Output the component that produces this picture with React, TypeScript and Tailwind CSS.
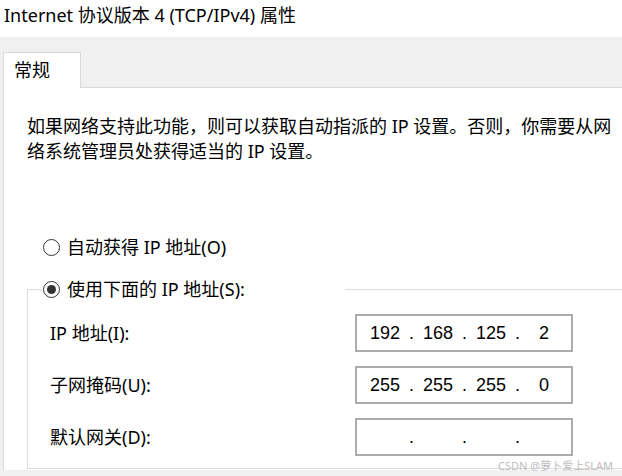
const UI_FONT = "font-['Segoe_UI','Noto_Sans','Noto_Sans_CJK_SC',sans-serif]";

function Radio({ checked }: { checked?: boolean }) {
  return (
    <span className="flex h-[17px] w-[17px] shrink-0 items-center justify-center rounded-full border border-[#333333] bg-white">
      {checked && <span className="h-[9px] w-[9px] rounded-full bg-[#333333]" />}
    </span>
  );
}

function IpBox({ parts }: { parts: string[] }) {
  return (
    <div className="flex h-[38px] w-[218px] items-center border-2 border-[#acacac] bg-white pl-[8px] font-['Liberation_Sans',Arial,sans-serif] text-[18px] text-black">
      {parts.map((p, i) => (
        <div key={i} className="flex">
          <span className="w-[40px] text-center">{p}</span>
          {i < 3 && <span className="w-[13px] text-center">.</span>}
        </div>
      ))}
    </div>
  );
}

const rows = [
  { label: 'IP 地址(I):', parts: ['192', '168', '125', '2'] },
  { label: '子网掩码(U):', parts: ['255', '255', '255', '0'] },
  { label: '默认网关(D):', parts: ['', '', '', ''] },
];

export default function App() {
  return (
    <div className={`relative flex h-[476px] w-[622px] flex-col overflow-hidden bg-white text-black ${UI_FONT}`}>
      {/* 标题 */}
      <div className="h-[37px] shrink-0 pl-[4px] pt-[2px] text-[18px] leading-[26px]">
        Internet 协议版本 4 (TCP/IPv4) 属性
      </div>

      <div className="flex flex-1 flex-col bg-[#f0f0f0] pb-[6px] pl-[3px] pt-[15px]">
        {/* 选项卡 */}
        <div className="relative z-10 -mb-px h-[36px] w-[78px] border border-b-0 border-[#d9d9d9] bg-white pl-[10px] text-[18px] leading-[34px]">
          常规
        </div>

        <div className="-mr-[20px] flex flex-1 flex-col border-l border-t border-[#d9d9d9] bg-white pl-[23px] pt-[26px]">
          <p className="w-[592px] text-[18px] leading-[25px]">
            如果网络支持此功能，则可以获取自动指派的 IP 设置。否则，你需要从网络系统管理员处获得适当的 IP 设置。
          </p>

          <div className="ml-[16px] mt-[71px] flex h-[24px] items-center gap-[7px] text-[18px]">
            <Radio />
            <span>自动获得 IP 地址(O)</span>
          </div>

          <fieldset className="mb-px mt-[18px] flex-1 border border-[#dcdcdc] pb-[12px]">
            <legend className="ml-[14px] w-[303px] pl-[1px]">
              <div className="flex h-[24px] items-center gap-[7px] text-[18px]">
                <Radio checked />
                <span>使用下面的 IP 地址(S):</span>
              </div>
            </legend>
            <div className="mt-[13px] flex flex-col gap-[14px]">
              {rows.map((r) => (
                <div key={r.label} className="flex items-center">
                  <span className="w-[327px] pl-[22px] text-[18px]">{r.label}</span>
                  <IpBox parts={r.parts} />
                </div>
              ))}
            </div>
          </fieldset>
        </div>
      </div>

      <div className="absolute bottom-[4px] right-[9px] font-['Noto_Sans','Noto_Sans_CJK_SC',sans-serif] text-[11px] leading-[13px] text-[#bdbdbd]">
        CSDN @萝卜爱上SLAM
      </div>
    </div>
  );
}
